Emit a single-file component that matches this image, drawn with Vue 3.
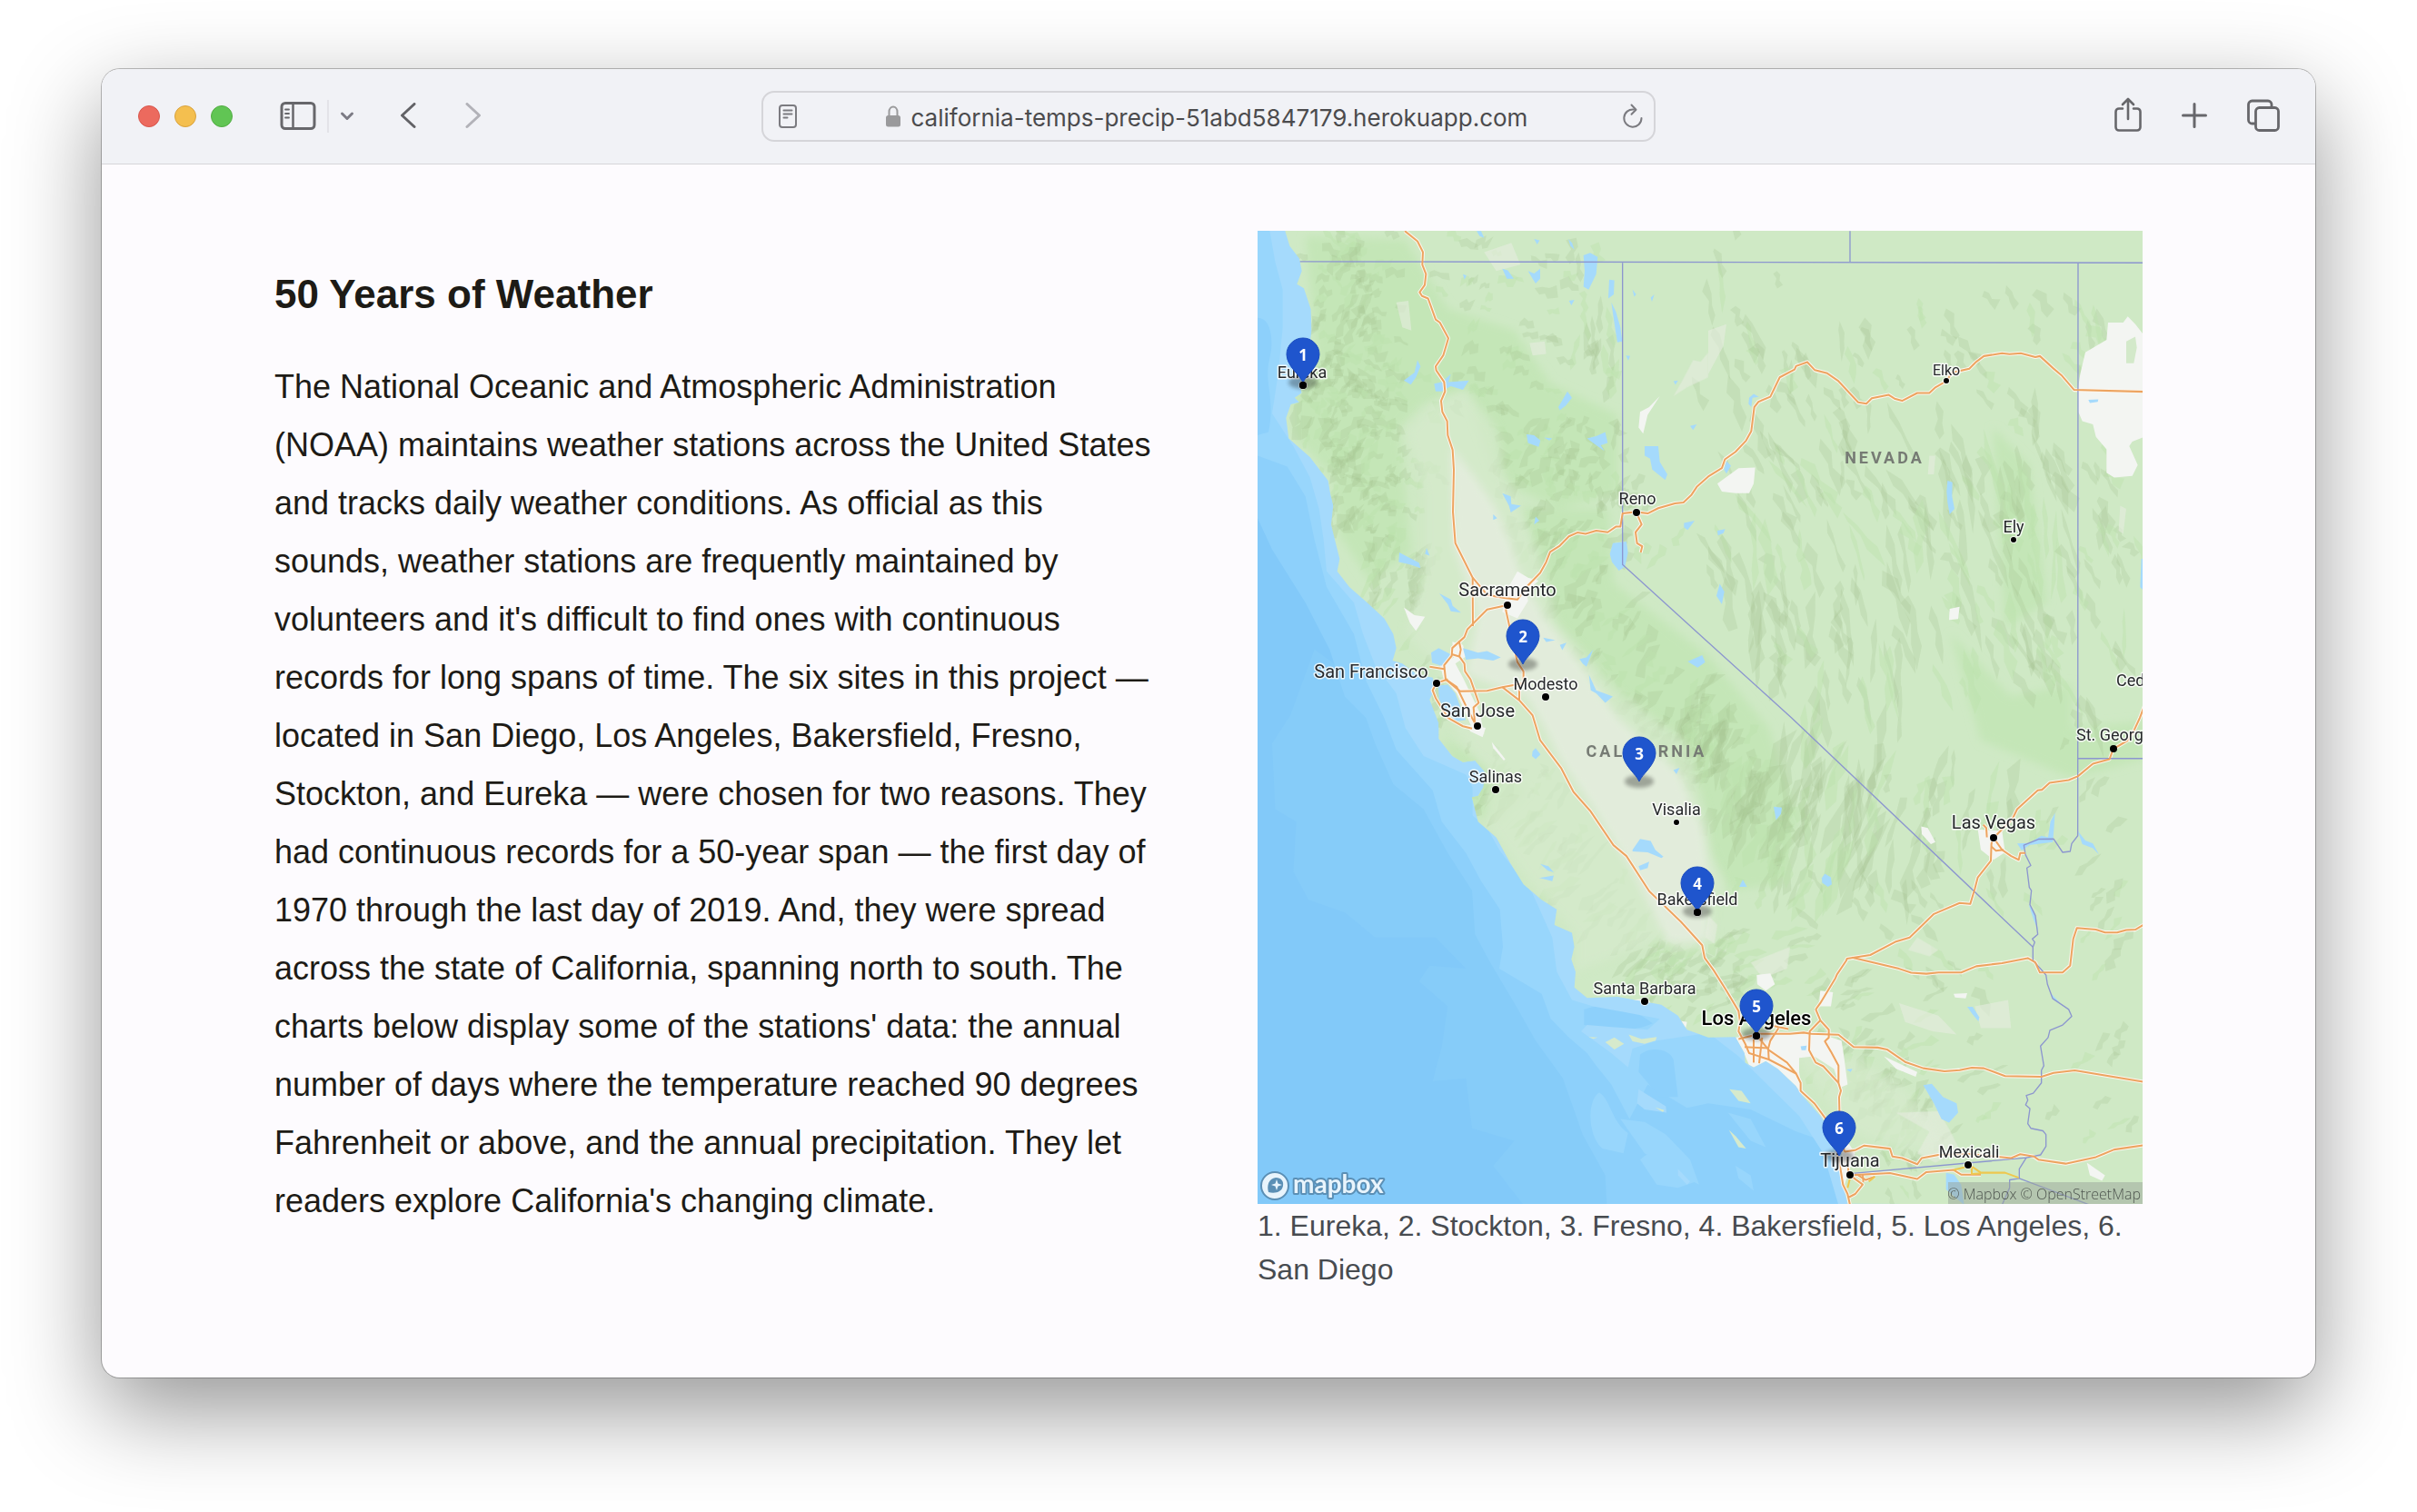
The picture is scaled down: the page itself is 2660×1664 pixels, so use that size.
<script setup>
const cities = [
  { name: 'Eureka', x: 49, y: 162, dx: 50, dy: 170, r: 4, cls: 'town' },
  { name: 'Sacramento', x: 275, y: 402, dx: 275, dy: 412, r: 4, cls: 'city' },
  { name: 'San Francisco', x: 125, y: 492, dx: 197, dy: 498, r: 4, cls: 'city' },
  { name: 'San Jose', x: 242, y: 535, dx: 242, dy: 545, r: 4, cls: 'city' },
  { name: 'Modesto', x: 317, y: 505, dx: 317, dy: 513, r: 4, cls: 'town' },
  { name: 'Reno', x: 418, y: 301, dx: 417, dy: 310, r: 4, cls: 'town' },
  { name: 'Elko', x: 758, y: 159, dx: 758, dy: 165, r: 3, cls: 'small' },
  { name: 'Ely', x: 832, y: 332, dx: 832, dy: 340, r: 3, cls: 'town' },
  { name: 'Salinas', x: 262, y: 607, dx: 262, dy: 615, r: 4, cls: 'town' },
  { name: 'Visalia', x: 461, y: 643, dx: 461, dy: 651, r: 3, cls: 'town' },
  { name: 'Bakersfield', x: 484, y: 742, dx: 484, dy: 750, r: 4, cls: 'town' },
  { name: 'Santa Barbara', x: 426, y: 840, dx: 426, dy: 848, r: 4, cls: 'town' },
  { name: 'Los Angeles', x: 549, y: 874, dx: 549, dy: 886, r: 4, cls: 'metro' },
  { name: 'Tijuana', x: 652, y: 1030, dx: 652, dy: 1039, r: 4, cls: 'city' },
  { name: 'Mexicali', x: 783, y: 1020, dx: 782, dy: 1028, r: 4, cls: 'town' },
  { name: 'Las Vegas', x: 810, y: 658, dx: 810, dy: 668, r: 4, cls: 'city' },
]

const stations = [
  { n: 1, x: 50, y: 167 },
  { n: 2, x: 292, y: 477 },
  { n: 3, x: 420, y: 606 },
  { n: 4, x: 484, y: 749 },
  { n: 5, x: 549, y: 884 },
  { n: 6, x: 640, y: 1018 },
]

const coast =
  '103,12 118,60 150,100 158,140 142,182 165,195 188,262 190,330 182,400 184,440 150,500 158,530 135,545 150,560 122,566 106,610 115,675 185,735 245,810 252,850 262,890 255,950 270,1010 283,1060 275,1100 315,1150 380,1205 430,1250 460,1300 470,1345 458,1385 490,1395 540,1430 590,1440 600,1470 580,1510 600,1560 610,1585 610,1635 655,1690 690,1710 730,1705 762,1740 758,1790 740,1818 720,1822 740,1900 800,1950 845,2030 890,2100 950,2150 1000,2180 992,2230 1050,2255 1058,2300 1048,2340 1062,2380 1058,2430 1100,2463 1200,2460 1290,2475 1345,2485 1400,2520 1430,2565 1500,2590 1590,2588 1620,2640 1622,2670 1650,2685 1690,2665 1730,2690 1790,2745 1810,2775 1870,2840 1890,2870 1897,2910 1940,2960 1940,3000 1945,3060 1960,3121 2940,3125 2940,0 100,0'

const lakes = [
  '1088,90 1110,82 1135,95 1130,150 1105,200 1088,190 1092,140', '1173,168 1190,170 1188,215 1170,228',
  '1180,240 1195,270 1210,320 1216,365 1200,368 1192,320', '905,140 925,148 945,133 945,165 930,180 920,165',
  '820,133 838,138 858,165 835,165', '1290,700 1335,700 1340,750 1365,790 1358,808 1315,775 1308,740 1290,730',
  '1100,675 1130,668 1160,655 1168,690 1145,697 1157,715 1125,693', '900,662 925,665 946,682 940,702 905,690', '958,672 985,675 975,682',
  '1035,525 1050,545 1030,570 1010,585 1005,575', '540,425 550,445 535,480 518,503 495,490 530,465',
  '595,500 620,495 650,470 642,495 710,490 690,520 650,508 620,525 600,525', '480,1040 510,1055 545,1072 550,1090 515,1078 478,1070', '570,1025 580,1050 565,1045',
  '1185,1010 1230,1005 1235,1040 1225,1085 1205,1098 1182,1070 1175,1045', '1432,1388 1480,1368 1490,1390 1465,1408',
  '612,1170 650,1190 656,1210 684,1232 650,1228 640,1205', '820,850 848,860 850,885 882,890 848,912 842,890', '690,1345 740,1360 770,1355 815,1375 790,1385 740,1378 700,1382',
  '1075,1380 1098,1375 1120,1350 1098,1405 1085,1395', '1106,1430 1130,1480 1185,1500 1160,1520 1130,1490 1112,1480', '955,1312 995,1320 965,1326', '1010,1335 1032,1328 1018,1352',
  '930,925 942,938 925,950', '790,918 803,930 790,936', '1420,945 1455,938 1432,968 1420,960', '1440,635 1462,630 1450,648', '1385,492 1400,490 1392,504',
  '690,150 702,155 695,168', '1040,235 1058,232 1048,250', '1038,38 1050,50 1058,72 1045,60', '925,38 943,42 935,55', '735,12 750,12 760,34 745,28', '1250,200 1262,215 1255,222', '1310,225 1322,215 1314,238',
  '1228,410 1242,412 1236,426', '2290,810 2306,815 2305,860 2313,900 2297,918 2290,880 2287,845', '1538,1140 1553,1165 1545,1205 1527,1178', '1635,545 1650,533 1667,542 1646,545 1642,575 1633,565',
  '1560,748 1575,762 1560,788 1552,775', '2755,552 2788,550 2786,558 2760,562', '2930,1060 2940,1060 2940,1165 2926,1150', '1530,970 1556,965 1550,978 1532,985',
  '1250,1990 1275,1955 1310,1962 1325,1990 1352,2012 1345,2016 1300,1998 1250,1995', '1270,2042 1305,2028 1300,2048 1275,2055', '945,2035 972,2042 990,2062 970,2056', '942,2080 990,2072 985,2090 965,2085',
  '920,1675 930,1665 946,1685 930,1700 918,1690', '1385,1735 1405,1728 1395,1748', '1716,1852 1743,1855 1740,1875 1724,1895', '1875,2080 1885,2066 1905,2078 1908,2100 1895,2108 1876,2095', '1602,2108 1614,2085 1628,2108',
  '2210,2742 2238,2738 2275,2780 2320,2800 2325,2830 2295,2862 2270,2850 2245,2800', '2355,2492 2373,2492 2395,2525 2392,2538 2372,2515', '1805,2618 1825,2616 1822,2630 1808,2630', '1956,2692 1976,2690 1970,2700',
  '2520,1970 2560,1968 2600,1945 2622,1950 2630,1900 2645,1872 2638,1965 2560,1975 2535,1992', '2720,1930 2745,1960 2770,1970 2790,2005 2770,1985 2735,1972', '2285,3022 2312,3028 2335,3060 2345,3125 2285,3075',
  '2558,2165 2575,2185 2590,2250 2575,2215', '2633,2450 2660,2478 2640,2470', '585,1360 610,1345 655,1368 640,1392 618,1402 588,1392', '608,1465 640,1462 665,1490 680,1530 700,1575 665,1580 630,1540 612,1510',
]

const pale = [
  '870,1100 905,1120 940,1130 900,1165 905,1195 870,1250 820,1230 835,1160', '655,1325 690,1335 700,1372 665,1395 690,1440 745,1550 760,1620 720,1600 670,1490 625,1440 615,1400 660,1375',
  '495,1215 530,1240 565,1245 535,1290 515,1265', '2390,1925 2470,1930 2480,1998 2442,2022 2400,1990', '2203,1915 2225,1920 2250,1965 2235,1972 2205,1940',
  '1590,2590 1850,2572 1940,2600 1948,2650 1960,2740 1935,2750 1915,2690 1850,2650 1800,2655 1800,2700 1812,2775 1740,2705 1690,2678 1640,2690 1618,2640', '1870,2440 1912,2445 1905,2490 1865,2490', '1660,2390 1705,2385 1720,2420 1690,2440 1662,2420',
  '2820,305 2870,305 2885,285 2910,310 2934,340 2940,670 2900,685 2890,700 2918,760 2900,795 2840,800 2815,785 2815,710 2780,670 2770,630 2735,620 2722,590 2722,510 2728,470 2745,400 2815,360',
  '1530,820 1600,770 1655,768 1650,820 1635,850 1590,850 1545,845', '2297,1220 2330,1213 2325,1252 2295,1255', '1275,590 1305,575 1340,540 1300,600 1285,660 1270,640',
  '785,1645 830,1700 825,1705 790,1665', '2080,2650 2190,2700 2185,2715 2120,2690', '1920,2920 1965,2930 1985,2960 1950,3060 1940,2990', '2310,2450 2355,2448 2350,2465 2315,2462', '1245,2470 1300,2465 1310,2480 1260,2480', '1400,2535 1430,2540 1425,2562', '2750,2990 2810,3030 2800,3048 2760,3030', '700,1590 765,1600 755,1630 715,1612',
]

const tan = [
  '1385,540 1420,480 1450,425 1475,430 1500,400 1500,480 1430,512', '2120,2830 2260,2825 2300,2890 2330,2950 2250,2990 2190,2960 2230,2890', '2130,2480 2260,2520 2320,2580 2240,2570 2150,2540', '2380,2490 2490,2470 2500,2560 2400,2560',
  '1500,2200 1530,2230 1520,2290 1490,2270', '1640,2350 1770,2300 1760,2370 1680,2400', '760,80 850,50 880,120 800,140', '910,370 960,365 965,405 920,410', '470,240 510,235 520,330 490,320', '2190,2270 2260,2310 2230,2330 2160,2310', '1500,330 1560,310 1550,380 1500,470', '2230,730 2250,730 2245,790 2225,790', '2860,890 2880,900 2870,980 2855,970',
]

const roads = [
  '498,12 540,45 558,80 556,120 568,150 564,185 547,208 555,220 575,228 600,295 614,305 642,355 625,410 600,445 602,458 628,495 631,525 618,555 622,590 638,620 640,665 656,712 660,775 657,910 665,1010 722,1120 723,1275',
  '722,1120 770,1175 825,1185 870,1190 900,1150 945,1105 965,1070 978,1038 1010,1018 1040,988 1068,976 1095,980 1130,970 1168,975 1195,957 1210,957 1217,915 1262,910 1300,915 1335,898 1390,883 1418,880 1445,855 1462,830 1500,797 1545,770 1555,742 1590,718 1625,682 1642,652 1652,575 1666,558 1705,542 1736,480 1785,455 1790,444 1827,431 1852,457 1893,467 1930,492 1995,560 2022,564 2040,547 2096,536 2115,548 2140,555 2190,530 2230,530 2250,512 2286,492 2305,465 2362,452 2385,430 2410,412 2470,403 2495,406 2532,403 2580,415 2595,412 2640,452 2668,475 2708,520 2940,526',
  '1262,910 1280,950 1260,975 1265,1010 1282,1020 1277,1040',
  '836,1208 770,1222 705,1285 695,1310 655,1345 653,1370 628,1400 633,1445 670,1470 700,1530 720,1568 735,1595',
  '677,1322 683,1350 678,1372 695,1395 697,1420 715,1445 742,1520 725,1535 730,1590', '653,1365 678,1372', '580,1405 628,1412',
  '640,1445 603,1457 590,1480 600,1505 640,1568 690,1595 720,1602', '633,1445 680,1483 770,1482 820,1470 890,1458', '836,1208 832,1225 870,1390 890,1420 890,1455 876,1465 876,1512',
  '820,1470 876,1512 920,1560 945,1640 1015,1730 1055,1805 1110,1865 1187,1975 1230,2010 1305,2122 1410,2220 1480,2295 1488,2335 1518,2375 1560,2440 1600,2505 1605,2540 1600,2570 1622,2610 1635,2640 1700,2660 1790,2705 1805,2735 1805,2760 1850,2800 1888,2850 1920,2930 1935,3000 1945,3060 1960,3090 1968,3125',
  '1600,2595 1670,2578 1770,2578 1815,2574 1840,2578 1930,2581 1980,2620 2060,2622 2090,2628 2150,2668 2210,2688 2280,2698 2330,2694 2370,2686 2410,2688 2480,2713 2600,2715 2640,2703 2710,2695 2940,2732',
  '1855,2500 1870,2480 1920,2400 1925,2388 1955,2345 1958,2338 2035,2326 2120,2283 2165,2270 2245,2195 2330,2160 2365,2163 2380,2115 2390,2078 2433,2025 2435,1970 2442,1952 2505,1890 2520,1860 2588,1800 2602,1798 2627,1776 2690,1767 2720,1755 2770,1715 2825,1700 2837,1668 2885,1640 2905,1610 2925,1568 2940,1530',
  '1855,2500 1870,2535 1898,2565 1898,2590 1885,2602 1905,2635 1930,2680 1930,2735 1938,2760 1932,2780 1935,2900 1950,2955', '1870,2535 1835,2570 1833,2630 1855,2670 1880,2682 1930,2735',
  '1975,2334 2130,2370 2170,2383 2220,2386 2260,2382 2335,2382 2385,2362 2470,2352 2555,2336 2580,2350 2595,2382 2670,2382 2695,2360 2705,2275 2717,2240 2780,2245 2810,2254 2850,2254 2880,2246 2910,2245 2940,2228',
  '1950,2955 1985,2950 2015,2935 2100,2945 2108,2970 2140,2975 2190,2995 2205,2975 2260,2965 2360,2962 2500,2975 2530,2963 2575,2970 2590,2980 2680,2993 2780,2972 2840,2948 2940,2934',
  '1968,3030 2100,3023 2190,3042 2220,3020 2310,3013 2335,3028 2400,3028', '1968,3030 2010,3060 1985,3090 1965,3100', '2010,3028 2012,3052', '1958,2980 1965,3030', '1995,3030 2020,3045 2050,3035',
  '1620,2620 1700,2624', '1650,2595 1650,2670', '1678,2590 1668,2672', '1660,2583 1700,2630 1760,2670 1790,2705', '1732,2560 1705,2600 1698,2625 1700,2660', '1700,2550 1765,2563',
  '2442,1952 2470,1990 2500,2010 2525,2022 2530,2000 2547,2000', '2435,1980 2450,1993 2475,1990', '2420,1950 2418,1920 2408,1910',
]

const yellowRoads = ['2310,3013 2345,3005 2359,2998 2372,3003 2400,3022 2480,3022 2525,3038', '2370,3000 2370,3026 2400,3024', '1968,3040 1960,3070', '2030,3050 2050,3035']

const borders = [
  '152,110 2940,114', '1968,12 1968,110', '2572,2301 1775,1568 1500,1327 1217,1078 1217,114',
  '2721,114 2720,1945 2700,1970 2695,1995 2670,1998 2640,1955 2590,1956 2542,1975 2547,2005 2565,2040 2552,2048 2560,2110 2567,2120 2562,2165 2580,2200 2588,2260 2570,2275 2578,2285 2572,2301 2572,2343 2615,2390 2620,2420 2637,2465 2690,2500 2700,2522 2670,2550 2628,2567 2622,2590 2597,2617 2608,2680 2600,2695 2600,2735 2573,2768 2550,2775 2555,2790 2548,2805 2562,2817 2555,2865 2565,2880 2605,2888 2615,2900 2615,2938 2597,2965 2550,2974',
  '2720,1698 2940,1698', '1968,3025 2550,2974 2527,3010 2527,3040 2760,3125', '2527,3040 2495,3045 2495,3070 2470,3125',
]

/* Relief: each strip scatters soft facets around a line, all leaning the same way. */
const strips = [
  [90, 10, 150, 330, 70, 130, 35, 13, 20],
  [100, 10, 90, 300, 40, 60, -50, 18, 20],
  [230, 20, 300, 200, 120, 60, 30, 13, 20],
  [70, 220, 170, 420, 70, 70, -60, 20, 20],
  [260, 210, 400, 330, 90, 60, -40, 18, 22],
  [360, 30, 400, 300, 30, 26, -85, 24, 16],
  [300, 330, 500, 620, 70, 90, -40, 24, 22],
  [480, 520, 590, 740, 50, 70, -65, 34, 22],
  [160, 470, 330, 640, 40, 24, -50, 18, 16],
  [250, 600, 470, 830, 50, 60, -40, 26, 16],
  [440, 800, 560, 830, 40, 34, -25, 22, 18],
  [520, 760, 700, 860, 50, 20, -20, 22, 16],
  [640, 880, 730, 1000, 50, 50, -50, 24, 20],
  [520, 60, 620, 260, 90, 34, 80, 30, 18],
  [620, 120, 900, 150, 90, 34, 70, 24, 16],
  [520, 300, 760, 330, 110, 44, 65, 36, 16],
  [560, 420, 700, 460, 110, 50, 82, 44, 18],
  [760, 300, 900, 330, 120, 50, 82, 46, 18],
  [760, 440, 900, 480, 110, 40, 75, 34, 18],
  [560, 560, 700, 700, 90, 60, -75, 52, 20],
  [700, 600, 860, 700, 80, 26, -78, 32, 18],
  [650, 760, 850, 800, 90, 20, 60, 22, 16],
  [720, 900, 860, 940, 80, 16, -30, 20, 14],
  [900, 560, 960, 1000, 60, 30, -40, 18, 16],
  [910, 60, 960, 500, 50, 34, 70, 24, 16],
  [690, 1030, 730, 1060, 30, 6, 70, 20, 14],
]

let seed = 50
const rnd = () => {
  seed = (seed * 16807) % 2147483647
  return seed / 2147483647
}
const relief = strips.flatMap(([x1, y1, x2, y2, spread, count, angle, len, wide]) =>
  Array.from({ length: count }, () => {
    const t = rnd()
    const cx = x1 + (x2 - x1) * t + (rnd() + rnd() - 1) * spread
    const cy = y1 + (y2 - y1) * t + (rnd() + rnd() - 1) * spread
    const a = ((angle + (rnd() - 0.5) * 36) * Math.PI) / 180
    const l = len * (0.4 + rnd() * 0.7)
    const w = wide * (0.2 + rnd() * 0.35)
    const pts = [[-1, 0.1], [-0.5, -0.7], [0.1, -0.5], [0.6, -1], [1, 0], [0.4, 0.5], [-0.1, 0.2], [-0.6, 0.9]]
    return {
      tone: rnd() > 0.35 ? 'shade' : 'lush',
      d: pts
        .map(([u, v]) => {
          const px = u * l * (0.7 + rnd() * 0.4)
          const py = v * w * (0.4 + rnd())
          return `${(cx + px * Math.cos(a) - py * Math.sin(a)).toFixed(1)},${(cy + px * Math.sin(a) + py * Math.cos(a)).toFixed(1)}`
        })
        .join(' '),
    }
  }),
)
</script>

<template>
  <div class="desktop">
    <div class="window">
      <header class="toolbar">
        <div class="side left">
          <div class="lights">
            <button class="light red" aria-label="Close"></button>
            <button class="light amber" aria-label="Minimize"></button>
            <button class="light green" aria-label="Zoom"></button>
          </div>
          <button class="tool sidebar" aria-label="Show sidebar">
            <svg width="40" height="32" viewBox="0 0 40 32" fill="none" stroke="#67676b" stroke-width="3" stroke-linecap="round">
              <rect x="2" y="1.500" width="36" height="28" rx="4" />
              <path d="M14.500 2v27" stroke-width="2.500" />
              <path d="M6 8.500h4M6 13h4M6 17.500h4" stroke-width="1.800" />
            </svg>
          </button>
          <span class="divider"></span>
          <button class="tool groups" aria-label="Tab groups">
            <svg width="16" height="12" viewBox="0 0 16 12" fill="none" stroke="#7c7b84" stroke-width="3" stroke-linecap="round" stroke-linejoin="round">
              <path d="M2.500 3l5.500 5.500 5.500-5.500" />
            </svg>
          </button>
          <button class="tool back" aria-label="Back">
            <svg width="18" height="30" viewBox="0 0 18 30" fill="none" stroke="#626266" stroke-width="3" stroke-linecap="round" stroke-linejoin="round">
              <path d="M16 1.500L2.500 14 16 26.500" />
            </svg>
          </button>
          <button class="tool forward" aria-label="Forward">
            <svg width="18" height="30" viewBox="0 0 18 30" fill="none" stroke="#b2b2b8" stroke-width="3" stroke-linecap="round" stroke-linejoin="round">
              <path d="M2 1.500l13.500 12.500L2 26.500" />
            </svg>
          </button>
        </div>

        <div class="address">
          <button class="tool" aria-label="Reader">
            <svg width="20" height="26" viewBox="0 0 20 26" fill="none" stroke="#7b7b80" stroke-width="2" stroke-linecap="round">
              <rect x="1" y="1" width="18" height="24" rx="3" />
              <path d="M5.500 6.500h9M5.500 10.500h9M5.500 14.500h4" />
            </svg>
          </button>
          <label class="url">
            <svg width="16" height="24" viewBox="0 0 16 24" aria-label="Secure">
              <path d="M3.500 12V7a4.500 5.500 0 0 1 9 0v5" fill="none" stroke="#9a9a9c" stroke-width="2" />
              <rect x="0" y="11" width="16" height="12.500" rx="2.500" fill="#9a9a9c" />
            </svg>
            <input type="text" value="california-temps-precip-51abd5847179.herokuapp.com" aria-label="Address" />
          </label>
          <button class="tool" aria-label="Reload">
            <svg width="24" height="28" viewBox="0 0 24 28" fill="none" stroke="#7b7b80" stroke-width="2" stroke-linecap="round" stroke-linejoin="round">
              <path d="M14 6.500A9.600 9.600 0 1 0 22.500 16" />
              <path d="M11.500 1.500l5 5.300-5 5" />
            </svg>
          </button>
        </div>

        <div class="side right">
          <button class="tool" aria-label="Share">
            <svg width="30" height="38" viewBox="0 0 30 38" fill="none" stroke="#67676b" stroke-width="2.600" stroke-linecap="round" stroke-linejoin="round">
              <path d="M9 12.500H5a3.500 3.500 0 0 0-3.500 3.500v17A3.500 3.500 0 0 0 5 36.500h20a3.500 3.500 0 0 0 3.500-3.500V16a3.500 3.500 0 0 0-3.500-3.500h-4" />
              <path d="M15 24V2M9 8l6-6 6 6" />
            </svg>
          </button>
          <button class="tool" aria-label="New tab">
            <svg width="28" height="38" viewBox="0 0 28 38" fill="none" stroke="#67676b" stroke-width="3" stroke-linecap="round">
              <path d="M14 7.500v25M1.500 20h25" />
            </svg>
          </button>
          <button class="tool" aria-label="Tab overview">
            <svg width="36" height="38" viewBox="0 0 36 38" fill="none" stroke="#67676b" stroke-width="2.800" stroke-linejoin="round">
              <rect x="9.500" y="11.500" width="25" height="25" rx="4" />
              <path d="M9.500 29H5.500a4 4 0 0 1-4-4V8a4 4 0 0 1 4-4H23a4 4 0 0 1 4 4v3.500" />
            </svg>
          </button>
        </div>
      </header>

      <main class="page">
        <article class="story">
          <h1>50 Years of Weather</h1>
          <p>
            The National Oceanic and Atmospheric Administration (NOAA) maintains weather stations across the United
            States and tracks daily weather conditions. As official as this sounds, weather stations are frequently
            maintained by volunteers and it's difficult to find ones with continuous records for long spans of time.
            The six sites in this project — located in San Diego, Los Angeles, Bakersfield, Fresno, Stockton, and
            Eureka — were chosen for two reasons. They had continuous records for a 50-year span — the first day of
            1970 through the last day of 2019. And, they were spread across the state of California, spanning north to
            south. The charts below display some of the stations' data: the annual number of days where the
            temperature reached 90 degrees Fahrenheit or above, and the annual precipitation. They let readers explore
            California's changing climate.
          </p>
        </article>

        <figure class="map">
          <svg viewBox="0 0 974 1071" role="img" aria-label="Map of the six weather stations">
            <defs>
              <clipPath id="land-clip">
                <polygon :points="coast" transform="translate(-4 -4) scale(0.33333 0.34435)" />
              </clipPath>
              <filter id="soft" x="-20%" y="-20%" width="140%" height="140%"><feGaussianBlur stdDeviation="14" /></filter>
              <filter id="smudge" x="-50%" y="-50%" width="200%" height="200%"><feGaussianBlur stdDeviation="2" /></filter>
            </defs>
            <rect width="974" height="1071" fill="#82c9f9" />
            <g transform="translate(-4 -4) scale(0.33333 0.34435)">
              <path fill="#86ccf9" d="M200 1350L120 1560 60 1650 70 1860 140 1900 130 2060 180 2150 300 2190 400 2270 600 2270 700 2370 580 2360 545 2410 640 2490 620 2620 590 2730 700 2720 720 2880 860 2920 790 3000 890 3125H1500L700 1700z" />
              <path fill="#8dd0fb" d="M12 12H2000V3125H1165L1160 3030 1085 2900 1060 2830 1020 2720 930 2600 860 2480 780 2350 730 2260 720 2120 640 2000 560 1860 460 1780 400 1650 370 1568 300 1500 250 1350 170 1200 60 1030 12 930z" />
              <path fill="#98d6fc" d="M12 12H2000V2960L1790 2890 1640 2820 1500 2800 1430 2815 1300 2740 1240 2850 1180 2740 1130 2680 1100 2640 1040 2590 980 2530 950 2450 810 2370 822 2300 812 2180 750 2090 700 2000 620 1900 590 1800 470 1670 430 1568 370 1450 330 1300 240 1150 200 1000 170 860 110 765 12 730z" />
              <path fill="#8dd0fb" d="M12 290C50 290 60 340 58 380S40 440 48 500 60 600 48 655L12 665zM1090 2500C1180 2470 1260 2500 1316 2545 1240 2580 1160 2560 1090 2550zM1275 2645C1300 2620 1370 2620 1385 2660L1400 2780 1340 2780 1270 2700z" />
              <path fill="#98d6fc" d="M1140 2765C1180 2790 1180 2860 1235 2895L1220 2960 1150 2945C1100 2900 1100 2790 1140 2765zM1210 2850L1290 2860 1360 2900 1440 2980 1470 3060 1390 3020 1290 2960zM1275 2980C1320 2940 1340 2970 1400 3000L1460 3050 1400 3070 1330 3060zM1565 2830L1640 2850 1690 2940 1640 2920zM1590 3000L1640 3030 1650 3080 1600 3040z" />
              <path fill="#a5dafc" d="M50 0L70 110 95 200 95 320 80 470 60 595 130 700 185 800 215 900 230 1000 240 1100 330 1200 360 1300 400 1400 470 1490 500 1600 560 1690 700 1750 722 1790 722 1880 770 1920 810 1990 920 2130 985 2270 1000 2380 1050 2470 1120 2490 1340 2530 1300 2565 1100 2550 1080 2570 1180 2640 1235 2685 1250 2625 1330 2600 1500 2575 1600 2650 1800 2840 1880 2960 1930 3125H2100V0z" />
              <path fill="#a5dafc" d="M1270 2755L1360 2810 1362 2830 1290 2820 1265 2800zM1400 3010L1440 3050 1430 3060 1400 3030z" />
              <polygon :points="coast" fill="#cfe9c5" />
            </g>

            <g clip-path="url(#land-clip)">
              <g transform="translate(-4 -4) scale(0.33333 0.34435)">
                <g fill="#c4e6b7" filter="url(#soft)">
                  <path d="M170 30L500 40 640 260 860 330 980 500 1200 600 1200 850 1000 900 800 800 700 520 560 560 480 640 520 1040 380 1130 280 980 260 800 130 660 130 560 210 420z" />
                  <path d="M880 900L1170 900 1190 1140 1500 1370 1700 1600 1800 1900 1740 2100 1560 2120 1400 1720 1200 1520 980 1260zM2300 1300L2500 1500 2700 1460 2700 1600 2940 1580 2940 1700 2700 1760 2400 1640z" />
                  <path d="M2440 640L2560 760 2620 1200 2480 1280zM620 1630L900 1800 800 1900 730 1880z" />
                </g>
              </g>
              <polygon v-for="(r, i) in relief" :key="i" :points="r.d" :class="r.tone" />
              <g transform="translate(-4 -4) scale(0.33333 0.34435)">
                <g filter="url(#soft)">
                  <path fill="#d6eacc" opacity="0.7" d="M600 560L700 520 800 640 830 800 880 900 960 1080 1000 1260 1200 1480 1430 1650 1500 1900 1520 2260 1450 2320 1340 2280 1060 2380 1060 2260 900 2080 760 1900 780 1750 660 1600 600 1400 500 1300 560 1100 560 850 500 650z" />
                  <path fill="#e2ecdb" d="M650 700L730 800 800 900 850 1020 880 1110 960 1250 1080 1400 1200 1568 1400 1740 1480 1920 1500 2060 1500 2280 1370 2290 1250 2060 1110 1840 1010 1700 960 1600 900 1500 700 1430 740 1240 660 1020z" />
                  <path fill="#d6eacc" opacity="0.7" d="M1750 2600L2000 2660 2160 2760 2300 2960 2100 2940 1960 2880zM1500 2000L1560 2100 1500 2200z" />
                </g>
                <polygon v-for="p in tan" :key="p" :points="p" fill="#e6ece0" opacity="0.6" />
                <polygon v-for="p in pale" :key="p" :points="p" fill="#f3f5f2" />
                <polygon points="2880,365 2910,350 2915,385 2905,435 2880,435" fill="#d3e9ca" />
                <polygon v-for="p in lakes" :key="p" :points="p" fill="#a5dafc" />
              </g>
            </g>

            <g transform="translate(-4 -4) scale(0.33333 0.34435)" fill="#d6eacc">
              <polygon points="1160,2605 1190,2590 1222,2610 1190,2628" />
              <polygon points="1237,2580 1280,2595 1330,2588 1326,2600 1290,2610 1250,2602" />
              <polygon points="1325,2813 1355,2822 1350,2828" />
              <polygon points="1105,2588 1135,2590 1120,2594" />
              <polygon points="1570,2755 1610,2760 1640,2800 1600,2792" />
              <polygon points="1568,2885 1590,2905 1625,2945 1600,2940" />
            </g>

            <g transform="translate(-4 -4) scale(0.33333 0.34435)" fill="none" stroke-linejoin="round">
              <polyline v-for="p in roads" :key="'c' + p" :points="p" stroke="#fbf6ee" stroke-width="12" />
              <polyline v-for="p in borders" :key="p" :points="p" stroke="#8c96cf" stroke-width="4" />
              <polyline v-for="p in roads" :key="p" :points="p" stroke="#eda460" stroke-width="6" />
              <polyline v-for="p in yellowRoads" :key="p" :points="p" stroke="#eec84f" stroke-width="6" />
            </g>

            <text class="state" x="690" y="256">NEVADA</text>
            <text class="state" x="428" y="579">CALIFORNIA</text>
            <g v-for="c in cities" :key="c.name">
              <circle :cx="c.dx" :cy="c.dy" :r="c.r + 1" fill="#fff" opacity="0.8" />
              <circle :cx="c.dx" :cy="c.dy" :r="c.r" />
              <text :class="['label', c.cls]" :x="c.x" :y="c.y">{{ c.name }}</text>
            </g>
            <text class="label town start" x="945" y="501">Ced</text>
            <circle cx="942" cy="570" r="4" />
            <text class="label town start" x="901" y="561">St. Georg</text>

            <g v-for="s in stations" :key="s.n" :transform="`translate(${s.x} ${s.y})`">
              <ellipse rx="16" ry="7" fill="#000" opacity="0.3" filter="url(#smudge)" />
              <path d="M0 0C-3-8-18-18-18-31a18 18 0 0 1 36 0C18-18 3-8 0 0z" fill="#1f55cd" stroke="#1b4cbd" />
              <text class="number" y="-24">{{ s.n }}</text>
            </g>
            <g v-for="c in cities.filter((c) => ['Eureka', 'Bakersfield', 'Los Angeles'].includes(c.name))" :key="'d' + c.name">
              <circle :cx="c.dx" :cy="c.dy" :r="c.r" />
            </g>

            <g>
              <circle cx="19" cy="1051" r="15" fill="#e8f4fc" stroke="#5b8fb5" stroke-width="2" />
              <path d="M12 1058c-2-7 0-15 8-16 6 0 9 4 8 9-1 7-9 9-16 7z" fill="#5b8fb5" />
              <path d="M21 1044l1.500 4.500 4.500 1.500-4.500 1.500-1.500 4.500-1.500-4.500-4.500-1.500 4.500-1.500z" fill="#e8f4fc" />
              <text class="brand" x="39" y="1059">mapbox</text>
            </g>
            <rect x="760" y="1047" width="214" height="24" fill="#9aa39a" opacity="0.5" />
            <text class="credit" x="972" y="1066">© Mapbox © OpenStreetMap</text>
          </svg>
          <figcaption>1. Eureka, 2. Stockton, 3. Fresno, 4. Bakersfield, 5. Los Angeles, 6. San Diego</figcaption>
        </figure>
      </main>
    </div>
  </div>
</template>

<style>
body {
  background: #fff;
}
</style>

<style scoped>
.desktop {
  padding: 76px 112px 148px;
}
.window {
  overflow: hidden;
  border-radius: 20px;
  background: #fdfbfe;
  box-shadow: 0 0 0 1px rgba(0, 0, 0, 0.25), 0 36px 100px rgba(0, 0, 0, 0.42);
}
.toolbar {
  display: grid;
  grid-template-columns: 1fr minmax(0, 984px) 1fr;
  align-items: center;
  height: 104px;
  border-bottom: 1px solid #d6d5d9;
  background: #f1f2f6;
}
.side {
  display: flex;
  align-items: center;
}
.left {
  padding-left: 40px;
}
.right {
  justify-content: flex-end;
  gap: 44px;
  padding: 0 39px 4px 0;
}
.lights {
  display: flex;
  gap: 16px;
}
.light {
  width: 24px;
  height: 24px;
  padding: 0;
  border: 1px solid;
  border-radius: 50%;
}
.red {
  border-color: #d8564c;
  background: #ec6a5e;
}
.amber {
  border-color: #d9a23c;
  background: #f4bf4f;
}
.green {
  border-color: #52ac43;
  background: #61c554;
}
.tool {
  display: flex;
  flex: none;
  padding: 0;
  border: 0;
  background: none;
}
.sidebar {
  margin-left: 52px;
}
.divider {
  width: 2px;
  height: 36px;
  margin: 0 12px;
  background: #e3e3e8;
}
.back {
  margin-left: 50px;
}
.forward {
  margin-left: 54px;
}
.address {
  display: flex;
  align-items: center;
  justify-content: space-between;
  box-sizing: border-box;
  height: 56px;
  padding: 0 12px 0 17px;
  border: 2px solid #d5d5d9;
  border-radius: 14px;
}
.url {
  display: flex;
  align-items: center;
  gap: 12px;
}
.url input {
  width: 684px;
  padding: 2px 0 0;
  border: 0;
  background: none;
  color: #4b4b4d;
  font: 26px Inter, sans-serif;
}
.page {
  display: grid;
  grid-template-columns: 1fr 1fr;
  gap: 108px;
  padding: 73px 190px 95px;
  color: #1d1b16;
  font: 36px/64px "Liberation Sans", Arial, sans-serif;
}
.story {
  padding-top: 38px;
}
h1 {
  margin: 0 0 38px;
  font-size: 44px;
  line-height: 64px;
}
p {
  margin: 0;
}
.map {
  margin: 0;
}
.map svg {
  display: block;
  width: 100%;
}
figcaption {
  color: #474b50;
  font-size: 32px;
  line-height: 48px;
}
.shade {
  fill: #a3bf90;
  opacity: 0.24;
}
.lush {
  fill: #bce2ad;
  opacity: 0.45;
}
.label {
  fill: #26282b;
  font-family: Roboto, sans-serif;
  text-anchor: middle;
  paint-order: stroke;
  stroke: rgba(255, 255, 255, 0.8);
  stroke-width: 3px;
  stroke-linejoin: round;
}
.start {
  text-anchor: start;
}
.small {
  font-size: 16px;
}
.town {
  font-size: 18px;
}
.city {
  font-size: 20px;
}
.metro {
  fill: #000;
  font-size: 22px;
  font-weight: 500;
}
.state {
  fill: #767b74;
  font: 700 18px Roboto, sans-serif;
  letter-spacing: 3px;
  text-anchor: middle;
}
.number {
  fill: #fff;
  font: 700 17px "Open Sans", sans-serif;
  text-anchor: middle;
}
.brand {
  fill: #e8f4fc;
  font: 700 28px Lato, sans-serif;
  paint-order: stroke;
  stroke: #5b8fb5;
  stroke-width: 4px;
  stroke-linejoin: round;
}
.credit {
  fill: #4f5650;
  font: 300 16px "Open Sans", sans-serif;
  text-anchor: end;
}
</style>
